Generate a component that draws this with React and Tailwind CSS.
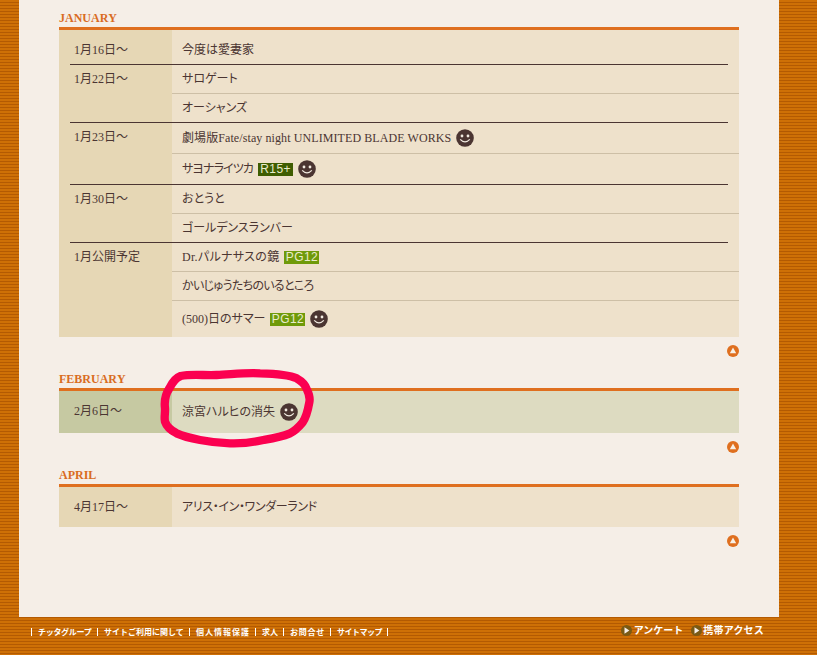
const serif = "font-['Liberation_Serif','Noto_Sans_CJK_JP',serif]";

function Smile() {
  return (
    <svg width="18" height="18" viewBox="0 0 18 18" className="shrink-0">
      <circle cx="9" cy="9" r="8.8" fill="#4b3532" />
      <circle cx="6" cy="7" r="1.4" fill="#f3ece2" />
      <circle cx="12" cy="7" r="1.4" fill="#f3ece2" />
      <path d="M4.2 10.4 Q9 15.4 13.8 10.4" fill="none" stroke="#f3ece2" strokeWidth="1.3" />
    </svg>
  );
}

function Badge({ children, dark }) {
  return (
    <span className={`inline-flex h-[13px] w-[35px] shrink-0 items-center justify-center font-['Liberation_Sans',sans-serif] text-[12px] leading-none tracking-[0.4px] text-[#e9eccb] ${dark ? "bg-[#3f5d02]" : "bg-[#6f9a0a]"}`}>
      {children}
    </span>
  );
}

function Top() {
  return (
    <div className="flex justify-end pt-[8px]">
      <svg width="12" height="12" viewBox="0 0 12 12">
        <circle cx="6" cy="6" r="6" fill="#df6f1f" />
        <path d="M6 2.6 L9.2 8.2 H2.8 Z" fill="#f7f0e6" />
      </svg>
    </div>
  );
}

function Title({ children }) {
  return (
    <h2 className="h-[15px] font-['Liberation_Serif',serif] text-[12px] leading-[13px] font-bold [font-kerning:none] text-[#d96c1f]">
      {children}
    </h2>
  );
}

function Item({ h, first, children }) {
  return (
    <div className={`flex items-center gap-[5px] pl-[10px] whitespace-nowrap ${h} ${first ? "" : "border-t border-[#cdbfa6]"}`}>
      {children}
    </div>
  );
}

function Group({ date, first, alt, top, items }) {
  return (
    <div className="relative flex">
      {!first && <div className="absolute top-0 right-[11px] left-[11px] h-px bg-[#4b3532]" />}
      <div className={`w-[113px] shrink-0 pl-[15px] ${alt ? "bg-[#c6c9a2]" : "bg-[#e6d7b5]"}`}>
        <div className={`leading-[16px] ${top}`}>{date}</div>
      </div>
      <div className="flex-1">{items}</div>
    </div>
  );
}

function Table({ children, alt }) {
  return (
    <div className={`border-t-[3px] border-[#df6f1f] ${alt ? "bg-[#dddbc1]" : "bg-[#eee1cb]"}`}>
      {children}
    </div>
  );
}

const footerLinks = [
  { label: "チッタグループ", cls: "w-[65px] tracking-[-0.3px]" },
  { label: "サイトご利用に関して", cls: "w-[91px] pl-[1px]" },
  { label: "個人情報保護", cls: "w-[65px] tracking-[1px]" },
  { label: "求人", cls: "w-[27px]" },
  { label: "お問合せ", cls: "w-[46px] tracking-[0.75px]" },
  { label: "サイトマップ", cls: "w-[56px] tracking-[-0.5px]" },
];

function Arrow() {
  return (
    <svg width="11" height="11" viewBox="0 0 11 11" className="shrink-0">
      <circle cx="5.5" cy="5.5" r="5.5" fill="#7a5a14" />
      <path d="M3.5 2.2 L8.4 5.5 L3.5 8.8 Z" fill="#f5eee7" />
    </svg>
  );
}

export default function App() {
  return (
    <div className={`flex h-[655px] w-[817px] flex-col overflow-hidden bg-[repeating-linear-gradient(180deg,#ce7006_0px,#ce7006_2px,#b35a02_2px,#b35a02_3px)] ${serif} text-[12px] text-[#4b3532] [font-feature-settings:'palt']`}>
      <div className="relative mx-[19px] h-[617px] w-[760px] shrink-0 bg-[#f5eee7] px-[40px] pt-[12px]">
        <section>
          <Title>JANUARY</Title>
          <Table>
            <Group first top="pt-[12px]" date="1月16日～" items={<Item h="h-[34px] pt-[6px]" first>今度は愛妻家</Item>} />
            <Group top="pt-[7px]" date="1月22日～" items={<>
              <Item h="h-[29px] pt-px" first>サロゲート</Item>
              <Item h="h-[29px]">オーシャンズ</Item>
            </>} />
            <Group top="pt-[7px]" date="1月23日～" items={<>
              <Item h="h-[31px] pt-px" first><span className="tracking-[0.09px]">劇場版Fate/stay night UNLIMITED BLADE WORKS</span> <Smile /></Item>
              <Item h="h-[31px]"><span className="tracking-[-0.9px]">サヨナライツカ</span> <Badge dark>R15+</Badge><Smile /></Item>
            </>} />
            <Group top="pt-[7px]" date="1月30日～" items={<>
              <Item h="h-[29px] pt-px" first>おとうと</Item>
              <Item h="h-[29px]">ゴールデンスランバー</Item>
            </>} />
            <Group top="pt-[7px]" date="1月公開予定" items={<>
              <Item h="h-[29px] pt-px" first><span className="tracking-[0.3px]">Dr.パルナサスの鏡</span> <Badge>PG12</Badge></Item>
              <Item h="h-[29px]"><span className="tracking-[-0.7px]">かいじゅうたちのいるところ</span></Item>
              <Item h="h-[37px]">(500)日のサマー <Badge>PG12</Badge><Smile /></Item>
            </>} />
          </Table>
          <Top />
        </section>
        <section className="mt-[16px]">
          <Title>FEBRUARY</Title>
          <Table alt>
            <Group first alt top="pt-[12px]" date="2月6日～" items={<Item h="h-[42px]" first>涼宮ハルヒの消失 <Smile /></Item>} />
          </Table>
          <Top />
        </section>
        <section className="mt-[16px]">
          <Title>APRIL</Title>
          <Table>
            <Group first top="pt-[12px]" date="4月17日～" items={<Item h="h-[40px]" first><span className="tracking-[-0.35px]">アリス・イン・ワンダーランド</span></Item>} />
          </Table>
          <Top />
        </section>
        <svg className="pointer-events-none absolute top-[365px] left-[131px]" width="175" height="90" viewBox="0 0 525 270">
          <path
            d="M45 130 C42 105 48 85 58 70 C68 50 78 38 92 33 C125 26 165 32 200 30 C245 28 290 22 330 25 C375 26 415 28 440 40 C458 50 466 60 470 72 C478 88 481 98 478 112 C474 135 470 155 458 172 C445 188 435 198 418 206 C395 216 370 220 340 225 C310 232 275 236 240 235 C205 234 175 230 150 225 C125 220 100 214 80 205 C62 196 50 185 45 170 C42 155 46 145 45 130 Z"
            fill="none"
            stroke="#fb0050"
            strokeWidth="25"
            strokeLinejoin="round"
            style={{ filter: "blur(1.2px)" }}
          />
        </svg>
      </div>
      <div className="flex items-start justify-between pr-[53px] pl-[31px] font-['Noto_Sans_CJK_JP',sans-serif] text-white [font-feature-settings:normal]">
        <div className="flex items-center pt-[9px] text-[8px] leading-[12px] font-bold">
          <span className="h-[8px] w-px shrink-0 bg-white" />
          {footerLinks.map((l) => (
            <span key={l.label} className="flex items-center">
              <span className={`pl-[6px] whitespace-nowrap ${l.cls}`}>{l.label}</span>
              <span className="h-[8px] w-px shrink-0 bg-white" />
            </span>
          ))}
        </div>
        <div className="flex items-center gap-[8px] pt-[6px] text-[10px] leading-[14px] font-bold">
          <span className="flex items-center gap-[2px]">
            <Arrow />
            アンケート
          </span>
          <span className="flex items-center gap-[1px] tracking-[0.2px]">
            <Arrow />
            携帯アクセス
          </span>
        </div>
      </div>
    </div>
  );
}
